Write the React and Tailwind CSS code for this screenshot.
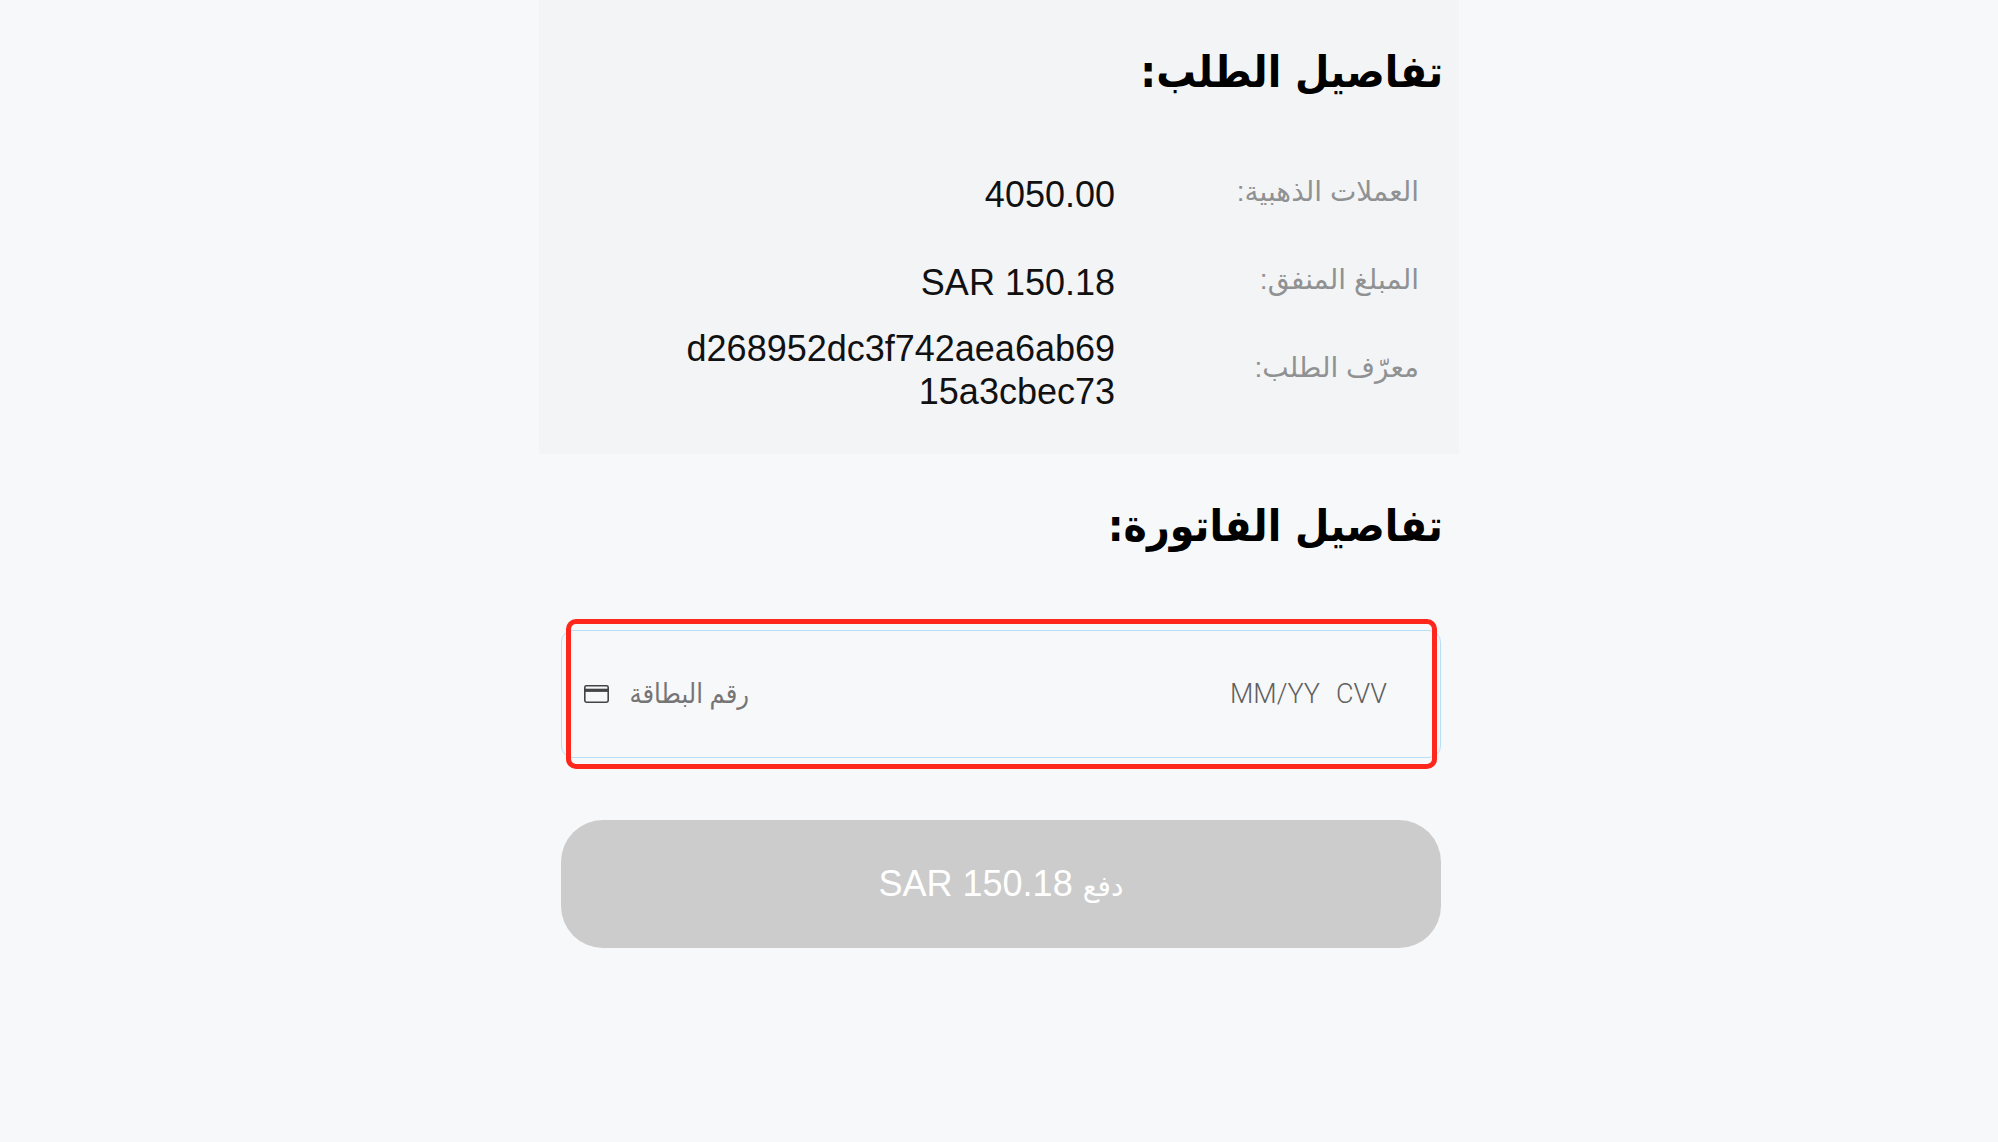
const rows = [
  { label: 'العملات الذهبية:', value: '4050.00' },
  { label: 'المبلغ المنفق:', value: 'SAR 150.18' },
  { label: 'معرّف الطلب:', value: 'd268952dc3f742aea6ab6915a3cbec73' },
];

function CardIcon() {
  return (
    <svg viewBox="0 0 25 18" className="h-[18px] w-[25px] shrink-0" fill="none" stroke="#444444" aria-hidden="true">
      <rect x="0.8" y="0.8" width="23.4" height="16.4" rx="1.6" strokeWidth="1.6" />
      <path d="M1 5.3h23" strokeWidth="3.2" />
    </svg>
  );
}

export default function App() {
  return (
    <div dir="rtl" className="min-h-screen bg-[#f7f8fa] font-['Liberation_Sans','DejaVu_Sans',sans-serif] text-black">
      <main className="mx-auto w-full max-w-[920px]">
        <section className="bg-[#f3f4f6] px-4 pt-8 pb-[42px]">
          <h1 className="font-['DejaVu_Sans_Condensed','DejaVu_Sans',sans-serif] text-[44px] leading-[80px] font-bold">تفاصيل الطلب:</h1>
          <dl className="mt-9 px-6">
            {rows.map((row) => (
              <div key={row.label} className="flex h-[88px] items-center">
                <dt className="w-[304px] shrink-0 text-[28px] text-[#909192]">{row.label}</dt>
                <dd dir="ltr" className="w-[440px] pt-1 text-right text-[36px] leading-[43px] break-all text-[#111111]">{row.value}</dd>
              </div>
            ))}
          </dl>
        </section>
        <section className="px-4 pt-8">
          <h2 className="font-['DejaVu_Sans_Condensed','DejaVu_Sans',sans-serif] text-[44px] leading-[80px] font-bold">تفاصيل الفاتورة:</h2>
        </section>
        <form className="mt-16 pr-[18px] pl-[22px]">
          <div className="relative rounded-xl border border-[#b9defa]">
            <div dir="ltr" className="flex h-[126px] items-center pr-5 pl-[22px] font-['Roboto','DejaVu_Sans_Condensed','DejaVu_Sans',sans-serif] text-[27px] font-light">
              <CardIcon />
              <input dir="rtl" aria-label="رقم البطاقة" placeholder="رقم البطاقة" className="ml-4 w-[124px] placeholder:text-[#757575]" />
              <input aria-label="MM/YY" placeholder="MM/YY" className="ml-auto w-[90px] placeholder:text-[#606060]" />
              <input aria-label="CVV" placeholder="CVV" className="mr-5 ml-4 w-[64px] placeholder:text-[#606060]" />
            </div>
            <div className="pointer-events-none absolute -inset-y-3 right-[3px] left-1 rounded-[10px] border-5 border-[#ff271c]" />
          </div>
          <button type="button" className="mt-[62px] h-32 w-full rounded-[42px] bg-[#cccccc] text-[36px] text-white">
            <span className="text-[28px]">دفع</span> <bdi>SAR 150.18</bdi>
          </button>
        </form>
      </main>
    </div>
  );
}
